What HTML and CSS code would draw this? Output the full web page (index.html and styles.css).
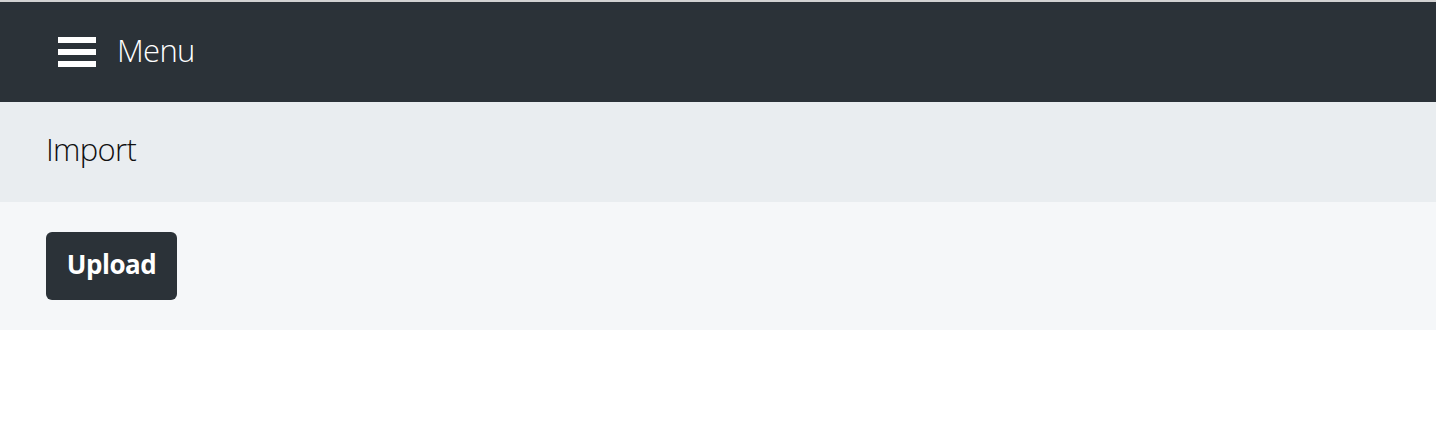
FILE: index.html
```html
<!DOCTYPE html>
<html>
<head>
<meta charset="utf-8">
<link rel="stylesheet" href="styles.css">
</head>
<body>
<header class="topbar">
  <button class="menu-toggle">
    <span class="burger"><span></span><span></span><span></span></span>
    <span class="menu-label">Menu</span>
  </button>
</header>
<section class="title-bar">
  <h1 class="title">Import</h1>
</section>
<section class="actions">
  <button class="btn-upload">Upload</button>
</section>
</body>
</html>
```
FILE: styles.css
```css
html, body {
  margin: 0;
  padding: 0;
  background: #ffffff;
  font-family: "Open Sans", "Liberation Sans", sans-serif;
}
.topbar {
  height: 100px;
  border-top: 2px solid #d2d2d2;
  background: #2b3238;
  display: flex;
  align-items: center;
  padding-left: 58px;
}
.menu-toggle {
  display: flex;
  align-items: center;
  gap: 21px;
  background: none;
  border: 0;
  padding: 0;
  color: #ffffff;
  font-family: inherit;
  cursor: pointer;
}
.burger {
  display: flex;
  flex-direction: column;
  gap: 6px;
  width: 38px;
}
.burger span {
  display: block;
  height: 6px;
  background: #ffffff;
}
.menu-label {
  font-size: 31px;
  font-weight: 300;
  letter-spacing: -0.7px;
  line-height: 1;
  padding-bottom: 4px;
}
.title-bar {
  height: 100px;
  background: #e9edf0;
  display: flex;
  align-items: center;
  padding-left: 46px;
}
.title {
  margin: 0;
  font-size: 31px;
  font-weight: 300;
  color: #111;
  letter-spacing: -0.7px;
  line-height: 1;
  padding-bottom: 5px;
}
.actions {
  height: 128px;
  background: #f5f7f9;
  display: flex;
  align-items: center;
  padding-left: 46px;
}
.btn-upload {
  width: 131px;
  height: 68px;
  border: 0;
  border-radius: 6px;
  background: #2b3238;
  color: #ffffff;
  font-family: inherit;
  font-size: 26px;
  font-weight: 700;
  letter-spacing: -0.5px;
  line-height: 1;
  padding: 0 0 4px 0;
}
```
